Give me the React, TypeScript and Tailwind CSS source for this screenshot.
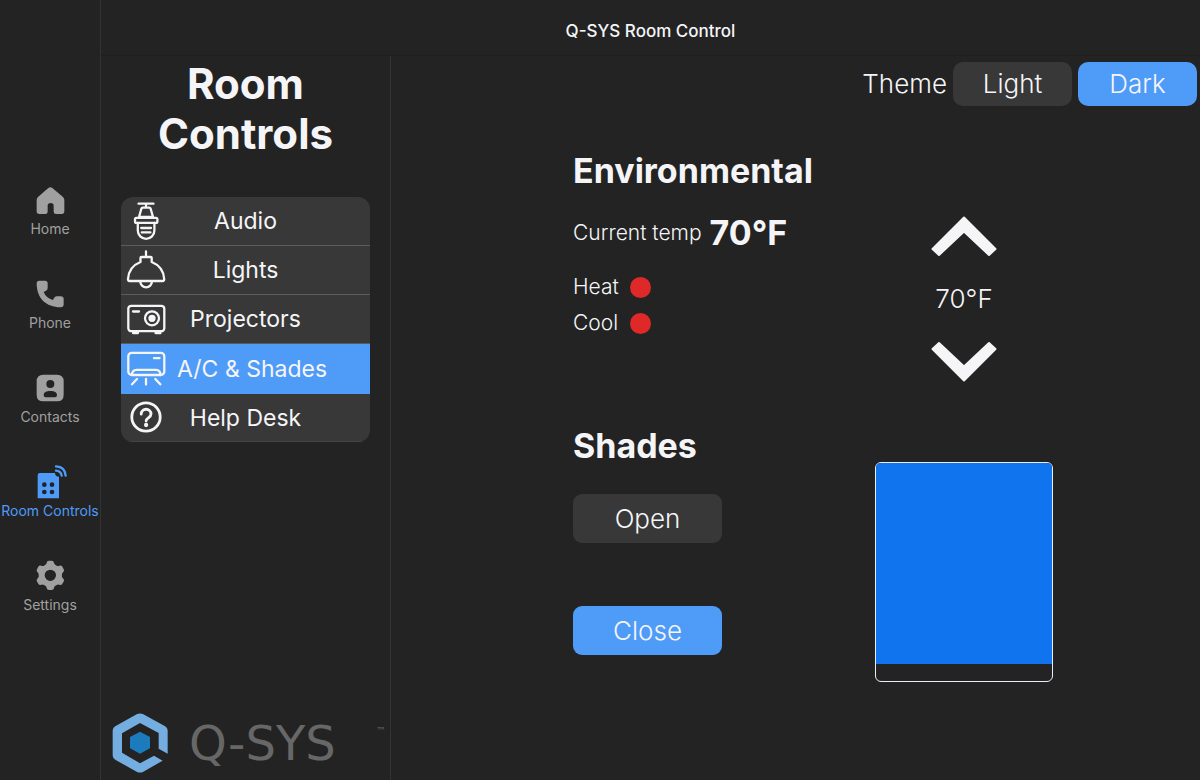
/**
 * Room control panel: app navigation, room section menu and the climate / shades page.
 */
import { useState } from 'react';
import type { ReactNode } from 'react';

const GEAR_ANGLES = [0, 60, 120, 180, 240, 300];

const NAV = [
  {
    label: 'Home',
    viewBox: '100 39 102 102',
    icon: (
      <path d="M146 54q6-5 12 0l32 27q4 4 4 9v34q0 8-8 8h-17q-7 0-7-7v-18q0-8-9-8t-9 8v18q0 7-7 7h-18q-8 0-8-8V90q0-5 4-9z" />
    ),
  },
  {
    label: 'Phone',
    viewBox: '100 321 102 102',
    icon: (
      <path d="M119 332h17q8 0 8 8v14q0 6-5 8l-7 4q7 18 28 24l3-6q3-5 8-5h12q9 0 9 8v16q0 9-9 9C139 412 111 385 111 340q0-8 8-8z" />
    ),
  },
  {
    label: 'Contacts',
    viewBox: '100 32 102 102',
    icon: (
      <path
        fillRule="evenodd"
        d="M131 43h41q20 0 20 20v40q0 20-20 20h-41q-20 0-20-20V63q0-20 20-20zM152 59a12 12 0 1 0 0 24a12 12 0 1 0 0-24zM132 104c0-8 8-12 20-12s20 4 20 12q0 7-6 7h-28q-6 0-6-7z"
      />
    ),
  },
  {
    label: 'Room Controls',
    viewBox: '100 313 102 102',
    icon: (
      <>
        <path
          fillRule="evenodd"
          d="M121 337h45q0 11 12 11v65h-64v-69q0-7 7-7zM134 365a7 7 0 1 0 0 14a7 7 0 1 0 0-14zM157 365a7 7 0 1 0 0 14a7 7 0 1 0 0-14zM134 387a7 7 0 1 0 0 14a7 7 0 1 0 0-14zM157 387a7 7 0 1 0 0 14a7 7 0 1 0 0-14z"
        />
        <path
          d="M169 317q27 1 29 28M169 330q15 1 17 15"
          fill="none"
          stroke="currentColor"
          strokeWidth="7"
          strokeLinecap="round"
        />
      </>
    ),
  },
  {
    label: 'Settings',
    viewBox: '100 596 102 102',
    icon: (
      <>
        <circle cx="152" cy="645" r="26" fill="none" stroke="currentColor" strokeWidth="18" />
        {GEAR_ANGLES.map(a => (
          <path
            key={a}
            d="M137 615q3-3 4-8q1-6 7-6h8q6 0 7 6q1 5 4 8l-6 8h-18z"
            transform={`rotate(${a} 152 645)`}
          />
        ))}
      </>
    ),
  },
];

const SECTIONS: { label: string; icon: ReactNode }[] = [
  {
    label: 'Audio',
    icon: (
      <>
        <path d="M12.5 2.7h15M20 2.7v4M16.7 6.6h6.6q1 0 1.3 1l2.4 8.4H13l2.4-8.4q.3-1 1.3-1z" />
        <rect x="9" y="16.8" width="22.4" height="5" rx="1.4" />
        <path d="M11.8 22v7.5a8.3 8.3 0 0 0 16.6 0V22M15.2 27h9.8M15.8 31.4h8.6" />
      </>
    ),
  },
  {
    label: 'Lights',
    icon: (
      <>
        <path d="M20 1.5v5.3M14.5 12V8q0-1 1-1h9.2q1 0 1 1v4c7.6 3 12 9.5 12.5 17q0 2-1.6 2H3.5q-1.6 0-1.5-2c.5-7.5 4.9-14 12.5-17z" />
        <path d="M14.3 31.5a5.8 5.8 0 0 0 11.6 0" />
      </>
    ),
  },
  {
    label: 'Projectors',
    icon: (
      <>
        <rect x="2.3" y="6.8" width="36" height="25.4" rx="3" />
        <path d="M7 12.5h6M7 34h5M29.5 34h5" />
        <circle cx="26" cy="19.3" r="7" />
        <circle cx="26" cy="19.3" r="2.5" fill="currentColor" />
      </>
    ),
  },
  {
    label: 'A/C & Shades',
    icon: (
      <>
        <rect x="2.3" y="3.8" width="36" height="22.2" rx="3.5" />
        <path d="M6 26q0-5 4.5-5.2H30q4.5.2 4.5 5.2M28 9.2h5.5M11 30l-5 5.3M20 30v5.5M29.3 30l5 5.3" />
      </>
    ),
  },
  {
    label: 'Help Desk',
    icon: (
      <>
        <circle cx="20" cy="19" r="14.2" strokeWidth="2.8" />
        <path d="M15.2 16.2c0-6.6 9.8-6.5 9.8-.2c0 3.8-4.9 3.9-4.9 7" strokeWidth="2.8" />
        <circle cx="20.1" cy="27" r="1" fill="currentColor" />
      </>
    ),
  },
];

function Chevron({ down = false }: { down?: boolean }) {
  return (
    <svg viewBox="0 0 66 40" className={down ? 'h-10 w-[66px] rotate-180' : 'h-10 w-[66px]'} aria-hidden="true">
      <path
        d="M33 1.5 64.5 33 58 39 33 15.5 8 39 1.5 33z"
        fill="currentColor"
        stroke="currentColor"
        strokeWidth="2"
        strokeLinejoin="round"
      />
    </svg>
  );
}

function Logo() {
  return (
    <div className="flex items-center pr-1 pb-[7px] pl-[11px]">
      <svg viewBox="36 40 171 180" className="h-[60px] w-[57px] shrink-0" aria-hidden="true">
        <path
          fill="#74addf"
          d="M110 44q10-5 20 0l64 35q9 5 9 15v68l-27-15v-47l-56-30-54 31v58l54 32 42-23 26 15-58 33q-10 5-20 0l-63-35q-9-5-9-15V94q0-10 9-15z"
        />
        <path fill="#1b7bbd" d="M120 96 150 112v34l-30 16-30-16v-34z" />
      </svg>
      <span className="ml-5 font-['DejaVu_Sans',sans-serif] text-[48px] leading-[60px] text-[#666766]">Q-SYS</span>
      <span className="mb-6 ml-auto font-['DejaVu_Sans',sans-serif] text-[10px] leading-3 text-[#666766]">™</span>
    </div>
  );
}

function Status({ label }: { label: string }) {
  return (
    <div className="flex h-9 items-center">
      <span className="w-[57px]">{label}</span>
      <span className="size-[21px] rounded-full bg-[#df2929]" />
    </div>
  );
}

export default function App() {
  const [page, setPage] = useState('Room Controls');
  const [section, setSection] = useState('A/C & Shades');
  const [theme, setTheme] = useState('Dark');
  const [target, setTarget] = useState(70);
  const [shade, setShade] = useState('Close');

  const pick = (on: boolean) => (on ? 'bg-[#4f9bf8]' : 'bg-[#383838]');

  return (
    <div className="flex min-h-screen bg-[#232323] font-['Inter',sans-serif] text-[#f5f5f8]">
      {/* App navigation */}
      <nav className="flex w-[101px] shrink-0 flex-col items-center justify-center gap-[38px] border-r border-[#333] pt-[18px]">
        {NAV.map(n => (
          <button
            key={n.label}
            onClick={() => setPage(n.label)}
            className={`flex flex-col items-center gap-0.5 ${page === n.label ? 'text-[#4f9bf8]' : 'text-[#a0a0a0]'}`}
          >
            <svg viewBox={n.viewBox} fill="currentColor" className="size-[34px]" aria-hidden="true">
              {n.icon}
            </svg>
            <span className="text-[14px] leading-5 whitespace-nowrap">{n.label}</span>
          </button>
        ))}
      </nav>

      <div className="flex min-w-0 flex-1 flex-col">
        <header className="flex h-14 items-center justify-center border-b border-[#1e1e1e] pt-1.5">
          <h1 className="text-[17px] leading-6 font-medium">Q-SYS Room Control</h1>
        </header>

        <div className="flex flex-1">
          {/* Room sections */}
          <aside className="flex w-[290px] shrink-0 flex-col border-r border-[#333]">
            <h2 className="mt-[3px] text-center text-[42px] leading-[50px] font-bold">
              Room
              <br />
              Controls
            </h2>
            <div className="mx-5 mt-[38px] overflow-hidden rounded-xl bg-[#383838]">
              {SECTIONS.map(s => (
                <button
                  key={s.label}
                  onClick={() => setSection(s.label)}
                  className={`grid w-full grid-cols-[minmax(56px,1fr)_auto_minmax(0,1fr)] items-center border-b text-[23px] leading-8 last:h-12 last:border-[#444] ${
                    section === s.label ? 'h-[50px] border-[#4f9bf8] bg-[#4f9bf8]' : 'h-[49px] border-[#5c5c5c]'
                  }`}
                >
                  <svg
                    viewBox="0 0 40 40"
                    fill="none"
                    stroke="currentColor"
                    strokeWidth="2.3"
                    strokeLinecap="round"
                    strokeLinejoin="round"
                    className="ml-[5px] size-10"
                    aria-hidden="true"
                  >
                    {s.icon}
                  </svg>
                  <span>{s.label}</span>
                </button>
              ))}
            </div>
            <div className="mt-auto">
              <Logo />
            </div>
          </aside>

          <main className="min-w-0 flex-1">
            {/* Theme */}
            <div className="flex items-center justify-end gap-1.5 pt-1.5 pr-[3px] text-[26px] leading-9 font-light">
              <span>Theme</span>
              {['Light', 'Dark'].map(t => (
                <button key={t} onClick={() => setTheme(t)} className={`h-11 w-[119px] rounded-[10px] ${pick(theme === t)}`}>
                  {t}
                </button>
              ))}
            </div>

            {/* Climate */}
            <section className="mt-[43px] grid grid-cols-[302px_178px] pl-[22.5%]">
              <div>
                <h2 className="text-[34px] leading-[44px] font-bold">Environmental</h2>
                <div className="mt-[18px] flex items-center gap-2">
                  <span className="text-[21px] leading-8 font-light">Current temp</span>
                  <span className="text-[34px] leading-[44px] font-bold">70°F</span>
                </div>
                <div className="mt-3.5 text-[21px] leading-8 font-light">
                  <Status label="Heat" />
                  <Status label="Cool" />
                </div>
              </div>
              <div className="flex flex-col items-center gap-[25px] pt-[67px]">
                <button aria-label="Raise temperature" onClick={() => setTarget(target + 1)}>
                  <Chevron />
                </button>
                <span className="text-[26px] leading-9 font-light">{target}°F</span>
                <button aria-label="Lower temperature" onClick={() => setTarget(target - 1)}>
                  <Chevron down />
                </button>
              </div>
            </section>

            {/* Shades */}
            <section className="mt-[42px] grid grid-cols-[302px_178px] pl-[22.5%]">
              <div className="flex flex-col items-start">
                <h2 className="mb-[26px] text-[34px] leading-[44px] font-bold">Shades</h2>
                {['Open', 'Close'].map(s => (
                  <button
                    key={s}
                    onClick={() => setShade(s)}
                    className={`mb-[63px] h-[49px] w-[149px] rounded-[9px] text-[26px] leading-9 font-light last:mb-0 ${pick(shade === s)}`}
                  >
                    {s}
                  </button>
                ))}
              </div>
              <div className="mt-[38px] h-[220px] overflow-hidden rounded-md border border-[#e8eef8]">
                <div className="bg-[#0f74ee]" style={{ height: shade === 'Close' ? '92%' : '8%' }} />
              </div>
            </section>
          </main>
        </div>
      </div>
    </div>
  );
}
